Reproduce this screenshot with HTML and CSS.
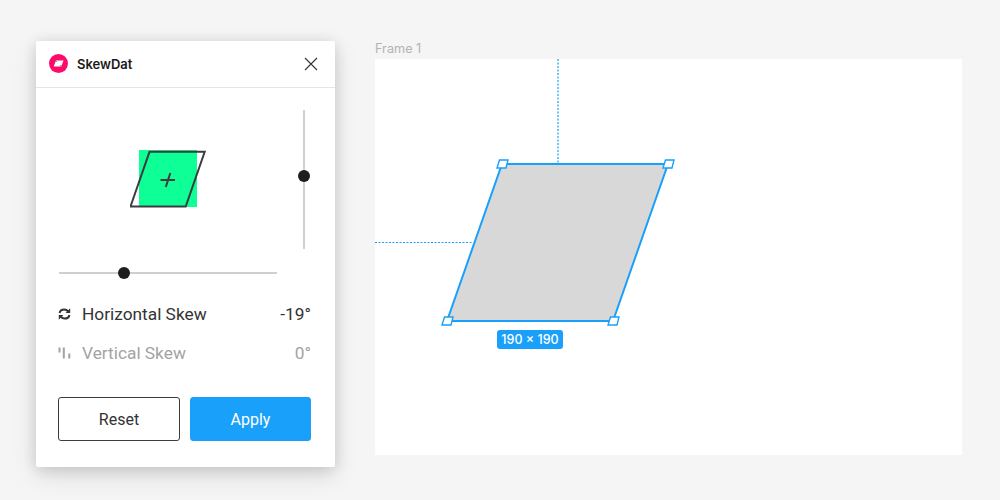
FILE: index.html
```html
<!DOCTYPE html>
<html lang="en">
<head>
<meta charset="utf-8">
<title>SkewDat</title>
<link rel="stylesheet" href="styles.css">
</head>
<body>
<main class="page">
  <section class="panel">
    <header class="panel-head">
      <svg class="logo" viewBox="0 0 19 19" width="19" height="19">
        <circle cx="9.500" cy="9.500" r="9.500" fill="#ff0a6c"/>
        <path d="M7 6.500H14.500L12.200 12.500H4.700z" fill="#fff"/>
        <path d="M6.700 6.700h1.500v1.300H6.300zM11 11h1.500l-.4 1.300h-1.500z" fill="#19d98f"/>
      </svg>
      <h1 class="title">SkewDat</h1>
      <svg class="close" viewBox="0 0 14 14" width="14" height="14">
        <path d="M1 1l12 12M13 1L1 13" fill="none" stroke="#333" stroke-width="1.1"/>
      </svg>
    </header>
    <div class="panel-body">
      <div class="stage">
        <div class="preview">
          <svg viewBox="0 0 80 60" width="80" height="60">
            <rect x="9" y="0" width="58" height="57" fill="#0dff96"/>
            <path d="M19.500 1.800H74.700L55.700 56.500H.5z" fill="none" stroke="#3c3c40" stroke-width="2"/>
            <path d="M30.500 30H45M40.300 23L35.800 37" fill="none" stroke="#3c3c40" stroke-width="2"/>
          </svg>
        </div>
        <div class="v-slider"><span class="thumb thumb-v"></span></div>
        <div class="h-slider"><span class="thumb thumb-h"></span></div>
      </div>
      <div class="rows">
        <div class="row">
          <svg class="row-icon" viewBox="0 0 13 12" width="13" height="12">
            <path d="M1.600 5C2 2.800 3.900 1.400 6.200 1.400c1.700 0 3 .7 3.900 1.900M11.400 7c-.4 2.200-2.300 3.600-4.600 3.600-1.700 0-3-.7-3.900-1.900" fill="none" stroke="#333" stroke-width="2"/>
            <path d="M12.200 .2v4.800H7.600zM.8 11.800V7h4.600z" fill="#333"/>
          </svg>
          <span class="row-label">Horizontal Skew</span>
          <span class="row-value">-19°</span>
        </div>
        <div class="row row-muted">
          <svg class="row-icon" viewBox="0 0 13 12" width="13" height="12">
            <path d="M.5 .5H2.500V5.500H.5zM4.800 .5H6.800V11.500H4.800zM10.300 6.500H12.300V11.500H10.300z" fill="#a3a3a3"/>
          </svg>
          <span class="row-label">Vertical Skew</span>
          <span class="row-value">0°</span>
        </div>
      </div>
      <div class="actions">
        <button class="btn btn-reset" type="button">Reset</button>
        <button class="btn btn-apply" type="button">Apply</button>
      </div>
    </div>
  </section>
  <section class="canvas">
    <div class="frame-label">Frame 1</div>
    <div class="frame">
      <svg class="skew-art" viewBox="0 0 587 396" width="587" height="396">
        <path d="M183 0V105" fill="none" stroke="#18a0fb" stroke-width="1.200" stroke-dasharray="2 1.500"/>
        <path d="M0 183.500H98" fill="none" stroke="#18a0fb" stroke-width="1.200" stroke-dasharray="2 1.500"/>
        <path d="M127 105H293L238 262H72z" fill="#d8d8d8" stroke="#18a0fb" stroke-width="2"/>
        <g fill="#fff" stroke="#18a0fb" stroke-width="1.400">
          <path d="M124.500 101H133L131 109H122z"/>
          <path d="M290.500 101H299L297 109H288z"/>
          <path d="M69.500 258H78L76 266H67z"/>
          <path d="M235.500 258H244L242 266H233z"/>
        </g>
      </svg>
      <span class="size-tag">190 × 190</span>
    </div>
  </section>
</main>
</body>
</html>
```
FILE: styles.css
```css
* { box-sizing: border-box; }
html, body { margin: 0; height: 100%; }
body { background: #f5f5f5; font-family: Roboto, "Liberation Sans", sans-serif; overflow: hidden; }
.page { display: flex; align-items: flex-start; gap: 40px; padding: 41px 0 0 36px; }

.panel {
  width: 299px; height: 426px; background: #fff; border-radius: 2px;
  box-shadow: 0 2px 14px rgba(0,0,0,.12), 0 8px 24px rgba(0,0,0,.12);
  display: flex; flex-direction: column;
}
.panel-head {
  height: 47px; flex: none; display: flex; align-items: center;
  padding: 0 17px 1px 13px; border-bottom: 1px solid #e5e5e5;
}
.logo { flex: none; }
.title { margin: 0 0 0 9px; font: 600 13px Inter, sans-serif; color: #1a1a1a; flex: 1; }
.close { flex: none; }

.panel-body { padding: 22px 23px 0; flex: 1; display: flex; flex-direction: column; }
.stage {
  display: grid; grid-template-columns: 218px 1fr; grid-template-rows: 139px auto;
  row-gap: 23px;
}
.preview { display: flex; align-items: center; justify-content: center; }
.preview svg { display: block; margin: 1px 0 0 3px; }
.v-slider { justify-self: end; width: 2px; height: 139px; background: #cfcfcf; position: relative; margin-right: 7px; }
.h-slider { width: 218px; height: 2px; background: #cfcfcf; position: relative; }
.thumb { position: absolute; width: 12px; height: 12px; border-radius: 50%; background: #1e1e20; }
.thumb-v { left: -5px; top: 60px; }
.thumb-h { left: 59px; top: -5px; }

.rows { margin-top: 30px; margin-right: 1px; display: flex; flex-direction: column; gap: 19px; }
.row { display: flex; align-items: center; height: 20px; color: #333; font-size: 17.300px; line-height: 20px; }
.row-icon { flex: none; margin-right: 11px; margin-left: -1px; }
.row-label { flex: 1; }
.row-muted { color: #a3a3a3; }

.actions { display: flex; gap: 10px; margin: 34px 0 0 -1px; }
.btn { height: 44px; border-radius: 3px; font: 400 16px Roboto, sans-serif; padding: 0; }
.btn-reset { width: 122px; background: #fff; border: 1px solid #3c3c3c; color: #333; }
.btn-apply { width: 121px; background: #18a0fb; border: 1px solid #18a0fb; color: #fff; }

.canvas { display: flex; flex-direction: column; }
.frame-label { height: 18px; font: 400 12.700px/14px Inter, sans-serif; color: #b3b3b3; padding-top: 1px; }
.frame { width: 587px; height: 396px; background: #fff; position: relative; }
.skew-art { display: block; }
.size-tag {
  position: absolute; left: 122px; top: 271px; width: 66px; height: 19px; text-align: center;
  background: #18a0fb; color: #fff; border-radius: 3px;
  font: 500 12.500px/19px Inter, sans-serif; white-space: nowrap;
}
```
